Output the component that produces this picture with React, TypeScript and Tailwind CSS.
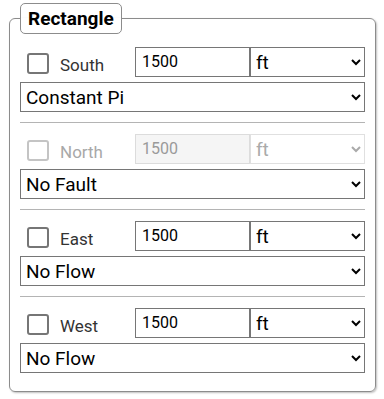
import React from 'react';

const sides = [
  { name: 'South', value: 'Constant Pi', disabled: false },
  { name: 'North', value: 'No Fault', disabled: true },
  { name: 'East', value: 'No Flow', disabled: false },
  { name: 'West', value: 'No Flow', disabled: false },
];

const Side = ({ name, value, disabled, last }: { name: string; value: string; disabled: boolean; last: boolean }) => {
  return (
    <div className={last ? 'flex flex-col' : 'flex flex-col border-b border-[#b4b4b4] pb-[10px] mb-[11px]'}>
      <div className="grid grid-cols-3 h-[30px]">
        <label className="flex items-center">
          <span
            className={
              'ml-[7px] mt-[2px] w-[22px] h-[21px] rounded-[3px] border-2 bg-white ' +
              (disabled ? 'border-[#c4c4c4]' : 'border-[#767676]')
            }
          />
          <span className={'ml-[11px] mt-[6px] text-[17px] ' + (disabled ? 'text-[#a8a8a8]' : 'text-[#333]')}>{name}</span>
        </label>
        <input
          type="text"
          defaultValue="1500"
          disabled={disabled}
          className={
            'h-[30px] border px-[6px] pb-[2px] text-[16px] outline-none ' +
            (disabled ? 'border-[#dcdcdc] bg-[#f5f5f5] text-[#9a9a9a]' : 'border-[#767676] bg-white text-black')
          }
        />
        <select
          disabled={disabled}
          defaultValue="ft"
          className={
            'h-[30px] border pl-[1px] pr-[9px] text-[19px] ' +
            (disabled ? 'border-[#e0e0e0] text-[#aaaaaa] bg-white' : 'border-[#767676] text-black bg-white')
          }
        >
          <option value="ft">ft</option>
          <option value="m">m</option>
        </select>
      </div>
      <select
        defaultValue={value}
        className="mt-[5px] h-[30px] border border-[#767676] bg-white pl-[1px] pr-[9px] text-[19px] text-black"
      >
        <option value={value}>{value}</option>
      </select>
    </div>
  );
};

export default function App() {
  return (
    <div className="w-[384px] h-[399px] bg-white font-['Roboto',sans-serif] pt-[3px] pl-[9px]">
      <fieldset className="w-[367px] rounded-[6px] border border-[#8c8c8c] px-[10px] pb-[18px] shadow-[1px_1px_2px_rgba(0,0,0,0.25)]">
        <legend className="h-[31px] rounded-[5px] border border-[#8c8c8c] px-[7px] text-[19px] leading-[29px] font-bold text-black">
          Rectangle
        </legend>
        <div className="mt-[13px] flex flex-col">
          {sides.map((s, i) => (
            <Side key={s.name} {...s} last={i === sides.length - 1} />
          ))}
        </div>
      </fieldset>
    </div>
  );
}
